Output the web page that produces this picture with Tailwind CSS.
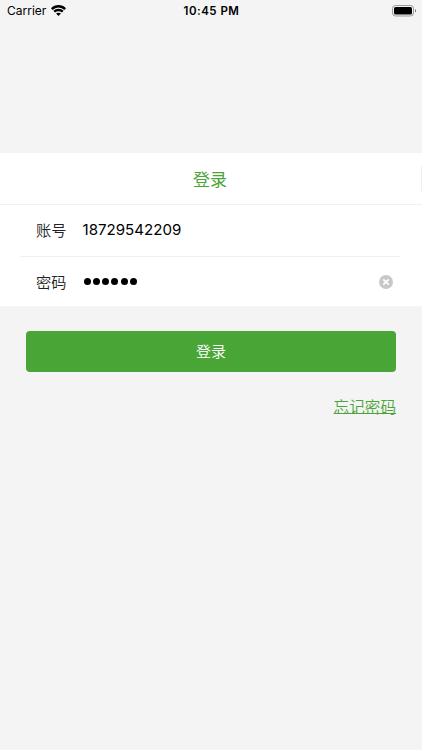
<!DOCTYPE html>
<html lang="zh-CN">
<head>
<meta charset="utf-8">
<meta name="viewport" content="width=device-width, initial-scale=1">
<title>登录</title>
<script src="https://cdn.jsdelivr.net/npm/@tailwindcss/browser@4"></script>
</head>
<body class="h-[750px] overflow-hidden bg-[#f4f4f4] font-['Inter','Noto_Sans_CJK_SC',sans-serif] text-black">
<div class="flex h-full flex-col">
  <header class="grid h-[22px] shrink-0 grid-cols-3 items-center pl-[7px] pr-[5px] text-[12px] leading-[22px]">
    <div class="flex items-center gap-[5px]">
      <span class="text-[12px]">Carrier</span>
      <svg class="mb-[1px] h-[11px] w-[15px]" viewBox="0 0 15 11" fill="none" stroke="#000" stroke-width="2.3">
        <path d="M.8 4.1C4.5.3 10.5.3 14.2 4.1"/>
        <path d="M3.2 6.7c2.4-2.3 6.2-2.3 8.6 0"/>
        <path d="M7.5 11 5.1 8.6c1.3-1.2 3.5-1.2 4.8 0Z" fill="#000" stroke="none"/>
      </svg>
    </div>
    <span class="-mr-[2px] -ml-[3px] text-center text-[11.5px] font-semibold tracking-[0.5px]">10:45 PM</span>
    <svg class="h-[12px] w-[25px] justify-self-end" viewBox="0 0 25 12">
      <rect x=".5" y=".5" width="21" height="10.5" rx="3" fill="none" stroke="#999"/>
      <rect x="2" y="2" width="18" height="7.5" rx="1.5" fill="#000"/>
      <path d="M23 4v3.6c1.5-.6 1.5-3 0-3.6Z" fill="#777"/>
    </svg>
  </header>
  <main class="mt-[131px]">
    <div class="flex h-[52px] items-center border-b border-[#f0f0f0] bg-white">
      <h1 class="flex-1 pt-[3px] pr-[1px] text-center text-[17px] leading-[25px] text-[#4aa537]">登录</h1>
      <span class="h-[25px] w-[1px] bg-[#f0f0f0]"></span>
    </div>
    <form class="bg-white pr-[22px] pl-5">
      <div class="flex h-[52px] items-center border-b border-[#f0f0f0] pl-4">
        <label class="w-[46.5px] pt-[1px] text-[15.2px] font-[350] text-[#222]">账号</label>
        <span class="text-[15.1px]">18729542209</span>
      </div>
      <div class="flex h-[49px] items-center pl-4 pr-[7px]">
        <label class="w-[47.5px] pt-[4px] text-[15.2px] font-[350] text-[#222]">密码</label>
        <div class="flex flex-1 gap-[2.3px]">
          <i class="size-[7px] rounded-full bg-black"></i><i class="size-[7px] rounded-full bg-black"></i><i class="size-[7px] rounded-full bg-black"></i><i class="size-[7px] rounded-full bg-black"></i><i class="size-[7px] rounded-full bg-black"></i><i class="size-[7px] rounded-full bg-black"></i>
        </div>
        <svg class="size-[14px]" viewBox="0 0 14 14">
          <circle cx="7" cy="7" r="7" fill="#c8c8c8"/>
          <path d="m4.3 4.3 5.4 5.4m0-5.4-5.4 5.4" stroke="#fff" stroke-width="1.7"/>
        </svg>
      </div>
    </form>
    <div class="flex flex-col px-[26px] pt-[25px]">
      <button class="h-[41px] rounded-[4px] bg-[#4aa537] pt-[2px] text-[15px] font-[350] text-white">登录</button>
      <a class="mt-[24px] self-end text-[15.6px] leading-[24px] font-[350] text-[#4aa537] underline decoration-1 underline-offset-[0px] [text-decoration-skip-ink:none]">忘记密码</a>
    </div>
  </main>
</div>
</body>
</html>
